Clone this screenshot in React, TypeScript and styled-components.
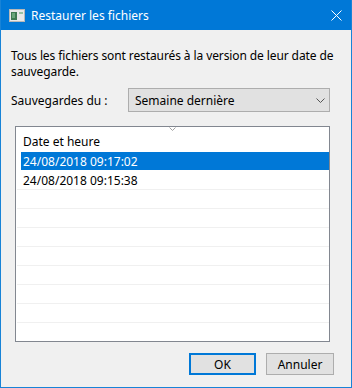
import React from 'react';
import styled, { createGlobalStyle } from 'styled-components';

const GlobalStyle = createGlobalStyle`
  html, body {
    margin: 0;
    padding: 0;
    background: #ffffff;
  }
  body {
    font-family: "Segoe UI", "Noto Sans", "Liberation Sans", sans-serif;
    font-size: 12px;
    color: #000;
  }
`;

const rows = ['24/08/2018 09:17:02', '24/08/2018 09:15:38', '', '', '', '', '', '', '', ''];

const App = () => {
  return (
    <>
      <GlobalStyle />
      <Window>
        <TitleBar>
          <AppIcon width="16" height="13" viewBox="0 0 16 13">
            <rect x="0.5" y="0.5" width="15" height="12" fill="#e9e9e9" stroke="#b8b8b8" />
            <rect x="2" y="3" width="6" height="8" fill="#3f7a52" />
            <rect x="3" y="4" width="3" height="5" fill="#6aa67a" />
            <rect x="10" y="3" width="4" height="2" fill="#9ac2a4" />
          </AppIcon>
          <TitleText>Restaurer les fichiers</TitleText>
          <CloseIcon width="11" height="11" viewBox="0 0 11 11">
            <path d="M0.5 0.5 L10.5 10.5 M10.5 0.5 L0.5 10.5" stroke="#fff" strokeWidth="1" />
          </CloseIcon>
        </TitleBar>
        <Body>
          <Description>
            Tous les fichiers sont restaurés à la version de leur date de sauvegarde.
          </Description>
          <FieldRow>
            <Label>Sauvegardes du :</Label>
            <Select>
              <span>Semaine dernière</span>
              <svg width="9" height="5" viewBox="0 0 9 5">
                <path d="M0.5 0.5 L4.5 4.5 L8.5 0.5" fill="none" stroke="#555" strokeWidth="1" />
              </svg>
            </Select>
          </FieldRow>
          <ListBox>
            <ListHeader>
              <SortArrow width="7" height="4" viewBox="0 0 7 4">
                <path d="M0.5 0.5 L3.5 3.5 L6.5 0.5" fill="none" stroke="#a0a0a0" strokeWidth="1" />
              </SortArrow>
              Date et heure
            </ListHeader>
            {rows.map((r, i) => (
              <ListRow key={i} $selected={i === 0}>
                {r}
              </ListRow>
            ))}
          </ListBox>
          <ButtonRow>
            <Button $primary>OK</Button>
            <Button>Annuler</Button>
          </ButtonRow>
        </Body>
      </Window>
    </>
  );
};

export default App;

const Window = styled.div`
  width: 352px;
  height: 388px;
  box-sizing: border-box;
  border: 1px solid #1883d7;
  border-top: none;
  background: #f0f0f0;
  display: flex;
  flex-direction: column;
  overflow: hidden;
`;

const TitleBar = styled.div`
  height: 30px;
  flex-shrink: 0;
  margin: 0 -1px;
  background: #0078d7;
  display: flex;
  align-items: center;
  padding-left: 9px;
  color: #fff;
`;

const AppIcon = styled.svg`
  flex-shrink: 0;
  margin-top: 1px;
`;

const TitleText = styled.span`
  margin-left: 6px;
  font-size: 12px;
  flex: 1;
`;

const CloseIcon = styled.svg`
  margin-right: 10px;
`;

const Body = styled.div`
  flex: 1;
  display: flex;
  flex-direction: column;
  padding: 18px 21px 0 10px;
`;

const Description = styled.p`
  margin: 0 -14px 0 0;
  line-height: 16px;
  letter-spacing: -0.1px;
`;

const FieldRow = styled.div`
  display: flex;
  align-items: center;
  margin-top: 8px;
`;

const Label = styled.span`
  width: 117px;
`;

const Select = styled.div`
  width: 202px;
  height: 24px;
  box-sizing: border-box;
  border: 1px solid #adadad;
  background: #e1e1e1;
  display: flex;
  align-items: center;
  justify-content: space-between;
  padding: 0 4px 0 6px;
`;

const ListBox = styled.div`
  margin: 14px 0 0 4px;
  width: 315px;
  height: 216px;
  box-sizing: border-box;
  border: 1px solid #828790;
  background: #fff;
  overflow: hidden;
`;

const ListHeader = styled.div`
  position: relative;
  height: 25px;
  display: flex;
  align-items: center;
  padding-left: 7px;
  padding-top: 3px;
  box-sizing: border-box;
`;

const SortArrow = styled.svg`
  position: absolute;
  left: 153px;
  top: 0;
`;

const ListRow = styled.div<{ $selected?: boolean }>`
  height: 19px;
  box-sizing: border-box;
  margin-left: 1px;
  border-bottom: 1px solid ${(p) => (p.$selected ? '#fff' : '#f0f0f0')};
  display: flex;
  align-items: center;
  padding-left: 6px;
  background: ${(p) => (p.$selected ? 'linear-gradient(to right, #fff 0 4px, #0078d7 4px)' : 'transparent')};
  color: ${(p) => (p.$selected ? '#fff' : '#000')};
`;

const ButtonRow = styled.div`
  display: flex;
  justify-content: flex-end;
  gap: 10px;
  margin: 11px -4px 0 0;
`;

const Button = styled.div<{ $primary?: boolean }>`
  width: ${(p) => (p.$primary ? '67px' : '68px')};
  height: 22px;
  box-sizing: border-box;
  display: flex;
  align-items: center;
  justify-content: center;
  background: #e1e1e1;
  border: ${(p) => (p.$primary ? '2px solid #0078d7' : '1px solid #adadad')};
`;
